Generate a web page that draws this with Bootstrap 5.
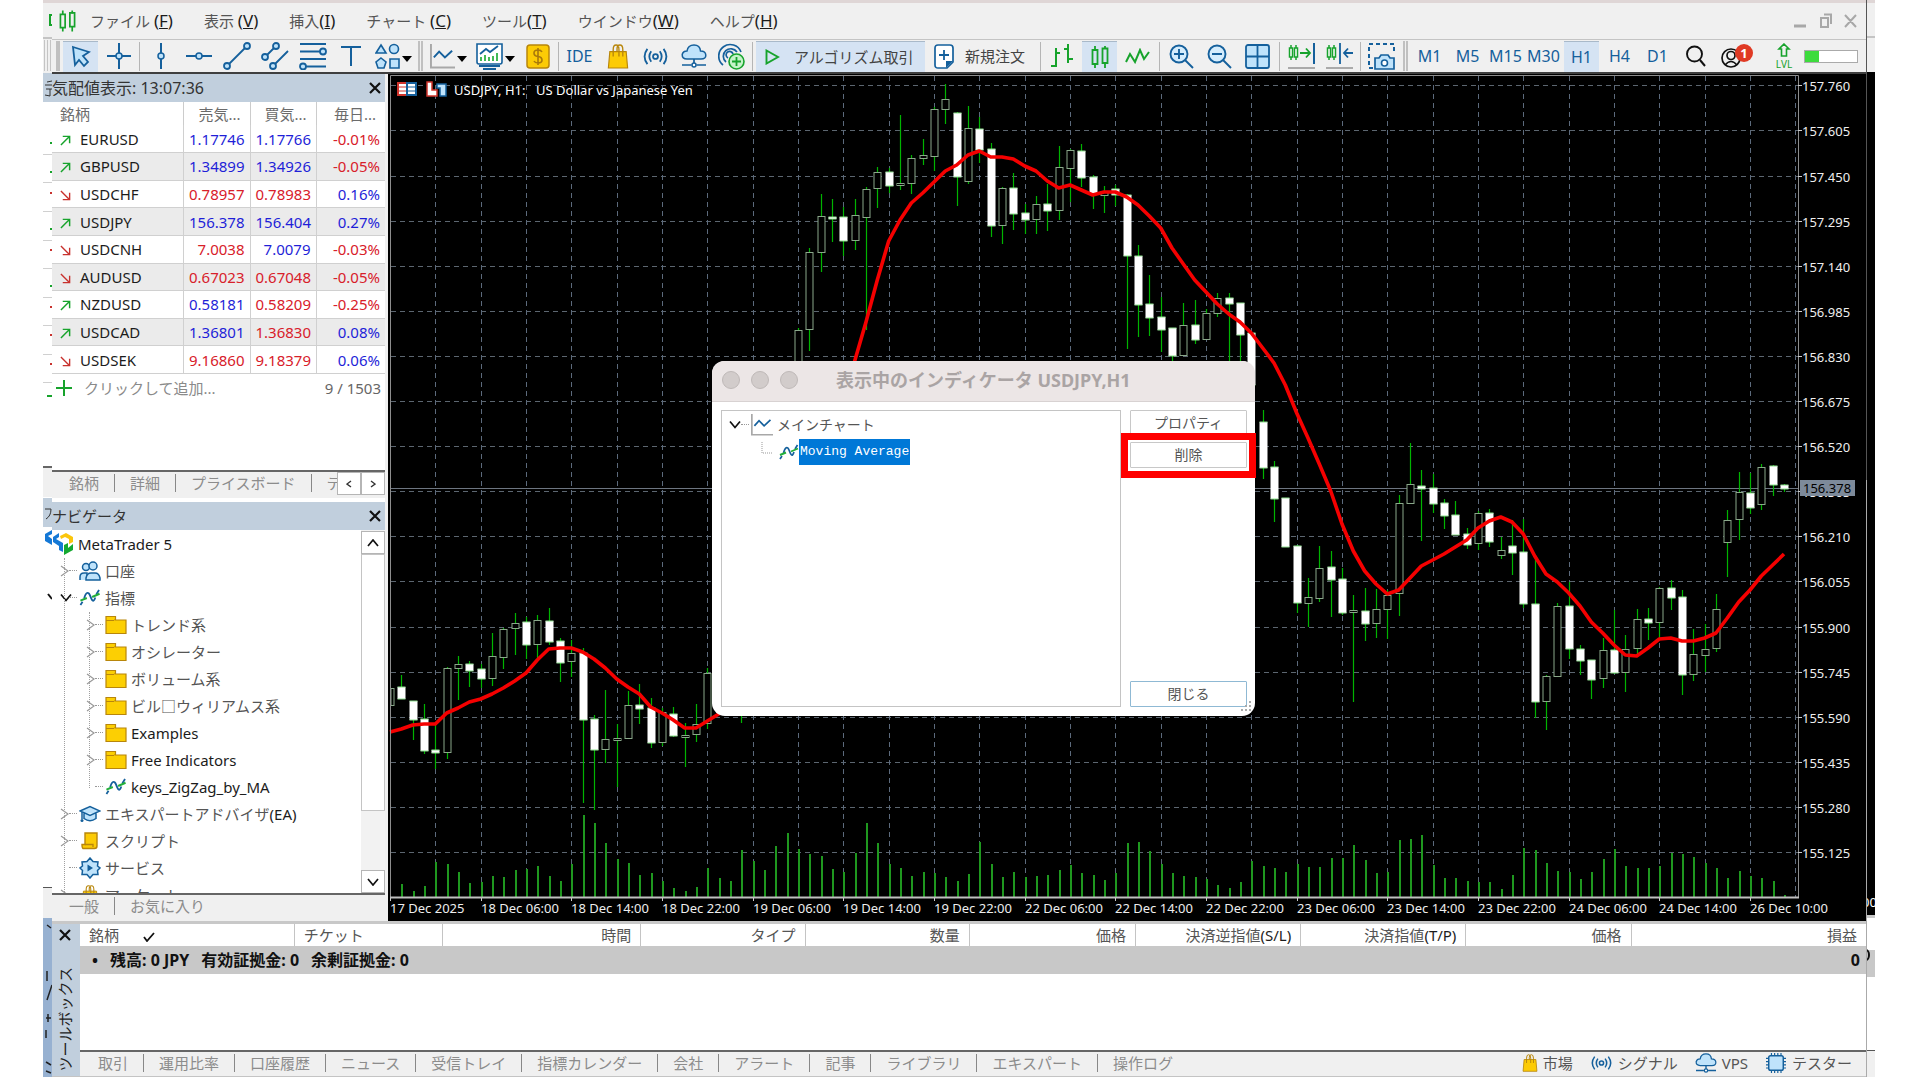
<!DOCTYPE html>
<html lang="ja">
<head>
<meta charset="utf-8">
<meta name="viewport" content="width=device-width, initial-scale=1">
<title>MetaTrader 5 - USDJPY,H1</title>
<link href="https://cdn.jsdelivr.net/npm/bootstrap@5.3.0/dist/css/bootstrap.min.css" rel="stylesheet">
<style>
:root{--ink:#1c1c1c;--kana:#6b6b6b;--line:#bdbdbd;--face:#f0f0f0;--title:#c1cfdd;--blue:#15609c;--sky:#bfe3fb;--green:#17a32c;--gold:#fccb05}
html,body{height:100%}
body{font-family:"Noto Sans","Noto Sans CJK JP",sans-serif;font-size:15px;line-height:20px;color:var(--kana);background:#fff;overflow:hidden}
button{font:inherit;color:inherit}
.stage{height:100vh;min-height:760px;padding:0 45px 3px 43px}
.edge{width:9px;flex:none;overflow:hidden;position:relative}
.win{min-width:0;position:relative}
.lat{color:var(--ink)}
.menubar{height:40px;flex:none;background:var(--face);border-top:3px solid #dfd6d6;border-bottom:1px solid #c4c4c4;padding-left:7px}
.menubar a{color:#555;text-decoration:none;white-space:nowrap}
.menubar .lat{font-size:17px}
.menus{gap:31px;margin-left:14px}
.toolbar{height:34px;flex:none;background:var(--face);border-bottom:2px solid #3f3f3f;gap:3px;padding-left:4px;overflow:hidden}
.tb{border:0;background:transparent;padding:0;width:35px;height:31px;flex:none;display:inline-flex;align-items:center;justify-content:center;color:var(--blue)}
.tb.on{background:#d5e3f3;border-top:1px solid #a9b9c9}
.tb.drop{width:44px;gap:2px}
.tb.drop::after{content:"";border:5px solid transparent;border-top:6px solid #000;border-bottom:0;margin-top:6px}
.tb.tf{font-size:16px}
.sep{width:1px;height:29px;background:#b5b5b5;flex:none}
.sep.wide,.sep2.wide{margin:0 1px}
.sep2{width:5px;height:30px;border:solid #c0c0c0;border-width:0 2px;flex:none}
.tb.algo{width:169px;gap:14px;color:#444;justify-content:flex-start;padding-left:9px}
.tb.neworder{width:109px;gap:11px;color:#444;justify-content:flex-start;padding-left:6px}
.meter{width:56px;height:13px;border:1px solid #aaa;background:#fff;border-radius:0}
.meter .progress-bar{background:#3ddb3d}
.side{width:333px;flex:none;background:#fff}
.chartgap{width:3px;background:var(--face);flex:none}
.paneltitle{height:28px;background:var(--title);color:#333;font-size:15px;flex:none}
.paneltitle.main{font-size:16px}
.closex{border:0;background:transparent;padding:0 4px;line-height:0}
.watch{height:399px;flex:none}
.quotes{table-layout:fixed;width:333px;height:272px;margin:0;border-collapse:collapse;font-size:15px}
.quotes th{font-weight:400;height:23px;padding:0 9px;border-left:1px solid #ccc;vertical-align:middle}
.quotes th:first-child,.quotes td:first-child{border-left:0}
.quotes td{padding:0 5px;border-left:1px solid #d0d0d0;border-bottom:1px solid #d0d0d0;text-align:right;line-height:20px;height:27px;vertical-align:middle}
.quotes td:first-child{text-align:left;color:var(--ink)}
.quotes tr:nth-child(even) td{background:#ebebeb}
.quotes .up{color:#1f1fd8}.quotes .dn{color:#d8202a}
.quotes td svg{margin-right:9px;vertical-align:-1px}
.tabs{height:28px;background:var(--face);border-top:2px solid #666;padding-bottom:4px;flex:none;overflow:hidden}
.tabs button{border:0;background:transparent;color:#8c8c8c;white-space:nowrap;flex:none;padding:0 15px;height:18px;line-height:18px;border-right:1px solid #888}
.tabs button:last-of-type{border-right:0}
.sq{width:24px;height:23px;border:1px solid #b5b5b5;background:#fff;padding:0;line-height:0;display:flex;align-items:center;justify-content:center;flex:none}
.tree{list-style:none;margin:0;padding:0;min-width:0;overflow:hidden;position:relative;color:#555}
.tree li{height:27px;display:flex;align-items:center;white-space:nowrap}
.tree .l1{padding-left:8px}.tree .l2{padding-left:34px}
.tw{width:9px;height:27px;flex:none;display:flex;align-items:center}
.dots{width:8px;border-top:1px dotted #999;flex:none;margin-right:2px}
.tree .ic{margin-right:4px;width:22px}
.vline{position:absolute;border-left:1px dotted #a0a0a0;width:0}
.sbar{width:24px;background:#f2f2f2;flex:none;padding-top:1px}
.thumb{background:#fff;border:1px solid #c4c4c4;height:257px}
.chart{background:#000;min-width:0;overflow:hidden}
.chart svg{display:block;width:100%;height:100%}
.toolbox{height:156px;flex:none;border-top:3px solid #c8c8c8;background:#fff;border-bottom:1px solid #c4c4c4}
.tbside{width:28px;background:var(--title);flex:none;color:#222;padding:5px 3px 4px 0}
.vert{writing-mode:vertical-rl;text-orientation:sideways;transform:rotate(180deg);white-space:nowrap}
.trades{table-layout:fixed;width:100%;margin:0;border-collapse:collapse;color:#555}
.trades th{font-weight:400;height:22px;padding:0 9px;border-left:1px solid #c4c4c4;text-align:right;white-space:nowrap;line-height:20px}
.trades th:first-child{border-left:0}
.trades td{background:#c8c8c8;height:28px;padding:0 6px 0 12px;font-size:16px;line-height:20px;font-weight:700;color:#111;white-space:nowrap}
.trades td span{margin-right:12px}
.status{gap:17px;padding-right:14px;color:#555}
.status a{color:inherit;text-decoration:none;display:flex;align-items:center;gap:5px;white-space:nowrap}
.dlg{position:absolute;left:660px;top:361px;width:543px;height:355px;border-radius:13px;background:#fff;color:#555;font-size:14px}
.dlghead{height:41px;background:#ece6e6;border-bottom:1px solid #d8d2d2;border-radius:12px 12px 0 0;padding:0 0 2px 10px;gap:11px}
.dlghead i{width:18px;height:18px;border-radius:50%;background:#d2cccb;border:1px solid #bfb9b8}
.dlghead h1{font-size:18px;line-height:24px;font-weight:700;color:#aaa4a4;margin:0 0 0 27px;white-space:nowrap}
.dlgbody{padding:8px 8px 9px 9px;gap:9px;height:314px}
.list{border:1px solid #c4c4c4;padding:0 0 0 7px}
.list .r{height:27px;display:flex;align-items:center}
.sel{background:#0078d7;color:#fff;font-family:"Liberation Mono",monospace;font-size:13px;line-height:26px;padding:0 1px}
.dlgbtn{width:117px;height:26px;border:1px solid #c8c8c8;border-radius:1px;background:#fff;padding:0;color:#555}
.redbox{position:absolute;left:409px;top:72px;width:135px;height:45px;border:7px solid #f00}
.grip{position:absolute;right:3px;bottom:3px}
</style>
</head>
<body>
<svg width="0" height="0" class="position-absolute">
 <defs>
  <symbol id="x" viewBox="0 0 12 12"><path d="M1 1L11 11M11 1L1 11" stroke="#111" stroke-width="2.2"/></symbol>
  <symbol id="up" viewBox="0 0 12 12"><path d="M1 11L10 2M3 1.5H10.500V9" fill="none" stroke="#17a32c" stroke-width="1.6"/></symbol>
  <symbol id="dn" viewBox="0 0 12 12"><path d="M1 1L10 10M3 10.500H10.500V3" fill="none" stroke="#c8322e" stroke-width="1.500"/></symbol>
  <symbol id="chev" viewBox="0 0 9 12"><path d="M1 1L8 6L1 11" fill="none" stroke="#999" stroke-width="1.200"/></symbol>
  <symbol id="chevd" viewBox="0 0 12 8"><path d="M1 1L6 7L11 1" fill="none" stroke="#111" stroke-width="1.700"/></symbol>
  <symbol id="folder" viewBox="0 0 22 20"><path d="M1 1.500H10.500V5H21V18.500H1Z" fill="#fccf03" stroke="#b8860b" stroke-width="1.200"/><path d="M1 5.500H9L10.500 4" fill="none" stroke="#b8860b"/></symbol>
  <symbol id="wave" viewBox="0 0 20 16"><path d="M1 15L3 12M4.500 9C6 3 8.500 2 10 6S13 14 15 8M16 5L18.500 1" fill="none" stroke="#15609c" stroke-width="1.700"/><path d="M1 11L7 8.500M12 7.500L19 4.500" stroke="#22ae3a" stroke-width="1.900"/></symbol>
  <symbol id="users" viewBox="0 0 22 20"><g fill="#bfe3fb" stroke="#15609c" stroke-width="1.500"><circle cx="7" cy="6" r="3.500"/><path d="M1 19V16Q1 12 5 12H8V19"/><circle cx="14" cy="5" r="4"/><path d="M7 19V17Q8 12 12 12H16Q20 12 21 17V19Z"/></g></symbol>
  <symbol id="cap" viewBox="0 0 22 18"><path d="M1 6L11 1.500L21 6L11 10.500ZM5 8.500V13.500Q11 18 17 13.500V8.500" fill="#bfe3fb" stroke="#15609c" stroke-width="1.500"/><path d="M3 7V14" stroke="#15609c" stroke-width="1.500"/><circle cx="3" cy="15.500" r="1.500" fill="#15609c"/></symbol>
  <symbol id="scroll" viewBox="0 0 18 18"><path d="M4 1H16V14Q16 16.500 13.500 16.500H2Q1 16 1 12.500H4Z" fill="#fccb05" stroke="#b8860b" stroke-width="1.400"/><path d="M4 12.500H12V15" fill="none" stroke="#b8860b" stroke-width="1.300"/></symbol>
  <symbol id="gear" viewBox="0 0 22 22"><path d="M11 1L14 4.500L19 5L18.500 9L21 11L18.500 13.500L19 17.500L14 17.500L11 21L8 17.500L3 17.500L3.500 13.500L1 11L3.500 9L3 5L8 4.500Z" fill="#bfe3fb" stroke="#15609c" stroke-width="1.500"/><path d="M8.500 7.500L14 11L8.500 14.500Z" fill="#15609c"/></symbol>
  <symbol id="bag" viewBox="0 0 22 26"><path d="M2.500 8H19.500L21 25H1Z" fill="#fccb05" stroke="#b8860b" stroke-width="1.200"/><path d="M6 13V6Q6 1 9 1T12 6V13M10 8V5Q10 1 13 1T16 6V13" fill="none" stroke="#b8860b" stroke-width="1.400"/></symbol>
  <symbol id="sig" viewBox="0 0 26 20"><g fill="none" stroke="#15609c" stroke-width="1.900"><circle cx="13" cy="10" r="2.600"/><path d="M8.500 4.500Q4.500 10 8.500 15.500M17.500 4.500Q21.500 10 17.500 15.500M4.500 2Q-1.500 10 4.500 18M21.500 2Q27.500 10 21.500 18"/></g></symbol>
  <symbol id="cloud" viewBox="0 0 26 24"><path d="M6 15Q1 15 1.200 10.500Q2 7 6 7Q7 1 13 1T19.500 7Q24.500 7 24.800 11T20 15Z" fill="#bfe3fb" stroke="#15609c" stroke-width="1.500"/><path d="M13 15V20M1 21H10.500M15.500 21H25" stroke="#15609c" stroke-width="1.700"/><circle cx="13" cy="21" r="2" fill="#fff" stroke="#15609c" stroke-width="1.500"/></symbol>
  <symbol id="chip" viewBox="0 0 22 22"><path d="M6 0V22M9.500 0V22M13 0V22M16.500 0V22M0 6H22M0 9.500H22M0 13H22M0 16.500H22" stroke="#15609c" stroke-width="1.300"/><rect x="3" y="3" width="16" height="16" rx="2" fill="#bfe3fb" stroke="#15609c" stroke-width="1.600"/></symbol>
  <symbol id="candles" viewBox="0 0 18 24"><path d="M4 1V5M4 19V23M14 1V4M14 18V23" stroke="#17a32c" stroke-width="1.800"/><path d="M1.500 5H6.500V19H1.500ZM11.500 3.500H16.500V18H11.500Z" fill="none" stroke="#17a32c" stroke-width="1.800"/></symbol>
  <symbol id="mt5" viewBox="0 0 20 22"><path d="M0 4L6 0V4L3 6L10 10V19L6 17V13L0 9Z" fill="#1478d6"/><path d="M7 3L13 0L20 4V9L16 11V6L12 4L8 6Z" fill="#fbc60c"/><path d="M11 12L15 10V15L20 11V17L11 22Z" fill="#14a830"/></symbol>
  <symbol id="linech" viewBox="0 0 26 26"><path d="M1 0V24.500H26" fill="none" stroke="#a8a8a8" stroke-width="2"/><path d="M4 14L9.500 8L15.500 14L23 7" fill="none" stroke="#15609c" stroke-width="2"/></symbol>
 </defs>
</svg>

<div class="stage d-flex">
 <div class="edge d-flex flex-column" aria-hidden="true">
  <svg class="h-100" width="9" viewBox="0 0 9 1077" preserveAspectRatio="none">
   <rect width="9" height="1077" fill="#fff"/><rect width="9" height="73" fill="#f0f0f0"/><rect width="9" height="3" fill="#dfd6d6"/><rect y="37" width="9" height="2" fill="#c4c4c4"/>
   <path d="M9 15H7V25H9" fill="none" stroke="#17a32c" stroke-width="2"/><path d="M1.500 40V71M4.500 40V71M7.500 40V71" stroke="#c4c4c4"/>
   <rect y="73" width="9" height="29" fill="#c1cfdd"/><path d="M4 82L9 81M2 85H9M3 89H9M7 89V96L2 95" fill="none" stroke="#333"/>
   <path d="M0 154.500H9M0 182.500H9M0 211.500H9M0 240.500H9M0 268.500H9M0 297.500H9M0 325.500H9M0 354.500H9M0 382.500H9" stroke="#d0d0d0"/>
   <path d="M7 143H9M7 172H9M7 229H9M7 286H9M4 396H9" stroke="#17a32c" stroke-width="2"/><path d="M7 193H9M7 250H9M7 307H9M7 335H9M7 364H9" stroke="#c8322e" stroke-width="2"/>
   <rect y="467" width="9" height="30" fill="#f0f0f0"/><rect y="466" width="9" height="2" fill="#666"/><rect y="498" width="9" height="29" fill="#c1cfdd"/><path d="M2 509H8Q8 516 3 519" fill="none" stroke="#333"/>
   <path d="M2 534L9 530V534L5 536L9 539V545L2 541Z" fill="#1478d6"/><path d="M5 594L9 599" stroke="#111" stroke-width="2"/>
   <rect y="888" width="9" height="31" fill="#f0f0f0"/><rect y="887" width="9" height="1" fill="#555"/>
   <rect y="918" width="9" height="159" fill="#97b1d1"/><path d="M4 925L8 928M4 971V981M4 1000L9 985M3 1018H8M5 1014V1022M3 1038V1030M3 1062L8 1065M3 1071L8 1073" stroke="#222" stroke-width="1.500"/>
  </svg>
 </div>

 <main class="win flex-grow-1 d-flex flex-column">
  <nav class="menubar d-flex align-items-center" aria-label="メニュー">
   <svg width="17" height="24"><use href="#candles"/></svg>
   <div class="menus d-flex">
    <a href="#">ファイル <span class="lat">(<u>F</u>)</span></a><a href="#">表示 <span class="lat">(<u>V</u>)</span></a><a href="#">挿入<span class="lat">(<u>I</u>)</span></a><a href="#">チャート <span class="lat">(<u>C</u>)</span></a><a href="#">ツール<span class="lat">(<u>T</u>)</span></a><a href="#">ウインドウ<span class="lat">(<u>W</u>)</span></a><a href="#">ヘルプ<span class="lat">(<u>H</u>)</span></a>
   </div>
   <svg class="ms-auto me-2" width="64" height="16" fill="none" stroke="#a8a8a8" stroke-width="2"><path d="M0 13H12" stroke-width="3"/><path d="M27 5H34V14H27ZM30 1.500H37V11M51 2L62 14M62 2L51 14"/></svg>
  </nav>

  <div class="toolbar d-flex align-items-center" role="toolbar" aria-label="ツールバー">
   <span class="sep2 me-n1" style="width:4px"></span>
   <button class="tb on" aria-label="カーソル"><svg width="20" height="24"><path d="M2 2L18 7L12 11L17 17L13 21L8 15L4 20Z" fill="#bfe3fb" stroke="#15609c" stroke-width="1.800"/></svg></button>
   <button class="tb" aria-label="クロスヘア"><svg width="24" height="26"><path d="M12 0V26M0 13H24" stroke="#15609c" stroke-width="2"/><circle cx="12" cy="13" r="3" fill="#bfe3fb" stroke="#15609c" stroke-width="1.500"/></svg></button>
   <span class="sep"></span>
   <button class="tb" aria-label="垂直線"><svg width="10" height="26"><path d="M5 0V26" stroke="#15609c" stroke-width="2"/><circle cx="5" cy="13" r="3" fill="#bfe3fb" stroke="#15609c" stroke-width="1.500"/></svg></button>
   <button class="tb" aria-label="水平線"><svg width="26" height="10"><path d="M0 5H26" stroke="#15609c" stroke-width="2"/><circle cx="13" cy="5" r="3" fill="#bfe3fb" stroke="#15609c" stroke-width="1.500"/></svg></button>
   <button class="tb" aria-label="トレンドライン"><svg width="28" height="28"><g fill="#bfe3fb" stroke="#15609c" stroke-width="1.800"><path d="M4 24L24 4"/><circle cx="4" cy="24" r="3"/><circle cx="24" cy="4" r="3"/></g></svg></button>
   <button class="tb" aria-label="チャネル"><svg width="28" height="28"><g fill="#bfe3fb" stroke="#15609c" stroke-width="1.800"><path d="M4 15L15 4M12 24L27 9"/><circle cx="4" cy="15" r="3"/><circle cx="15" cy="4" r="3"/><circle cx="12" cy="24" r="3"/></g></svg></button>
   <button class="tb" aria-label="フィボナッチ"><svg width="28" height="28"><g fill="#bfe3fb" stroke="#15609c" stroke-width="1.800"><path d="M1 2H27M1 9.500H27M1 17H27M1 24.500H27"/><circle cx="24" cy="9.500" r="3"/><circle cx="4" cy="24.500" r="3"/></g></svg></button>
   <button class="tb" aria-label="テキスト"><svg width="20" height="20"><path d="M0 1H20M10 1V20" stroke="#15609c" stroke-width="2"/></svg></button>
   <button class="tb drop" aria-label="図形"><svg width="25" height="26"><g fill="#bfe3fb" stroke="#15609c" stroke-width="1.600"><path d="M6 2L11 10H1Z"/><circle cx="19" cy="6" r="4.500"/><path d="M6 15L11 19L9 25H3L1 19Z"/><path d="M15 16H24V25H15Z"/></g></svg></button>
   <span class="sep2"></span>
   <button class="tb drop" aria-label="ラインチャート"><svg width="25" height="25"><use href="#linech"/></svg></button>
   <button class="tb drop" aria-label="インディケータ"><svg width="27" height="27"><path d="M1 1H26V19Q26 21 24 21H3Q1 21 1 19Z" fill="#fff" stroke="#15609c" stroke-width="1.600"/><path d="M4 11L10 6L14 9L22 3" fill="none" stroke="#15609c" stroke-width="1.800"/><path d="M5 18V14M9 18V12M13 18V14M17 18V13M21 18V10" stroke="#22ae3a" stroke-width="1.700"/><path d="M3 23H24M7 26H20" stroke="#15609c" stroke-width="2"/></svg></button>
   <button class="tb" aria-label="市場"><svg width="24" height="25"><rect x="1" y="1" width="22" height="23" rx="3" fill="#fccb05" stroke="#b8860b" stroke-width="1.500"/><path d="M16 8Q15 6 12 6Q8 6 8 9T12 12.500T16 16T12 19Q9 19 8 17M12 4V21" fill="none" stroke="#a8780b" stroke-width="1.600"/></svg></button>
   <span class="sep"></span>
   <button class="tb tf">IDE</button>
   <button class="tb" aria-label="マーケット"><svg width="22" height="25"><use href="#bag"/></svg></button>
   <button class="tb" aria-label="シグナル"><svg width="25" height="19"><use href="#sig"/></svg></button>
   <button class="tb" aria-label="VPS"><svg width="26" height="24"><use href="#cloud"/></svg></button>
   <button class="tb" aria-label="コピー"><svg width="27" height="27"><g fill="none" stroke="#15609c" stroke-width="1.700"><path d="M5 22A11.500 11.500 0 1 1 23 9M8 19A7.500 7.500 0 1 1 19 9M10 15A3.500 3.500 0 1 1 15 11"/></g><circle cx="18.500" cy="18.500" r="7.500" fill="#c5f3c9" stroke="#17a32c" stroke-width="1.600"/><path d="M18.500 14V23M14 18.500H23" stroke="#17a32c" stroke-width="1.800"/></svg></button>
   <span class="sep"></span>
   <button class="tb on algo"><svg width="15" height="16"><path d="M1.500 1.500L13 8L1.500 14.500Z" fill="none" stroke="#17a32c" stroke-width="1.900"/></svg>アルゴリズム取引</button>
   <button class="tb neworder"><svg width="20" height="25"><path d="M1 4Q1 1 4 1H16Q19 1 19 4V18L13 24H4Q1 24 1 21Z" fill="#fff" stroke="#15609c" stroke-width="1.700"/><path d="M19 17L12 24V17Z" fill="#15609c"/><path d="M10 6V16M5 11H15" stroke="#15609c" stroke-width="1.800"/></svg>新規注文</button>
   <span class="sep"></span>
   <button class="tb" aria-label="バーチャート"><svg width="24" height="24"><path d="M6 4V23M1 22H6M6 9H10M18 0V19M14 5H18M18 15H23" stroke="#17a32c" stroke-width="2"/></svg></button>
   <button class="tb on" aria-label="ローソク足"><svg width="18" height="24"><use href="#candles"/></svg></button>
   <button class="tb" aria-label="ライン"><svg width="25" height="16"><path d="M1 14L5 6L10 14L15 2L19 11L24 4" fill="none" stroke="#17a32c" stroke-width="2"/></svg></button>
   <span class="sep wide"></span>
   <button class="tb" aria-label="拡大"><svg width="25" height="25"><circle cx="10" cy="10" r="8.500" fill="#d5edfd" stroke="#15609c" stroke-width="1.900"/><path d="M16 16L24 24M10 5V15M5 10H15" stroke="#15609c" stroke-width="1.900"/></svg></button>
   <button class="tb" aria-label="縮小"><svg width="25" height="25"><circle cx="10" cy="10" r="8.500" fill="#d5edfd" stroke="#15609c" stroke-width="1.900"/><path d="M16 16L24 24M5 10H15" stroke="#15609c" stroke-width="1.900"/></svg></button>
   <button class="tb" aria-label="整列"><svg width="25" height="25"><rect x="1" y="1" width="23" height="23" rx="2" fill="#bfe3fb" stroke="#15609c" stroke-width="1.800"/><path d="M12.500 1V24M1 12.500H24" stroke="#15609c" stroke-width="1.800"/></svg></button>
   <span class="sep wide"></span>
   <button class="tb" aria-label="チャートシフト"><svg width="27" height="26"><path d="M3 2V17M8 2V17" stroke="#17a32c" stroke-width="1.500"/><path d="M1.500 5H4.500V14H1.500ZM6.500 5H9.500V14H6.500Z" fill="#fff" stroke="#17a32c" stroke-width="1.500"/><path d="M12 10H22M18 5.500L22 10L18 14.500" fill="none" stroke="#17a32c" stroke-width="1.800"/><path d="M26 0V21" stroke="#15609c" stroke-width="2"/><path d="M0 25H27" stroke="#aaa" stroke-width="2"/></svg></button>
   <button class="tb" aria-label="自動スクロール"><svg width="27" height="26"><path d="M3 2V17M8 2V17" stroke="#17a32c" stroke-width="1.500"/><path d="M1.500 5H4.500V14H1.500ZM6.500 5H9.500V14H6.500Z" fill="#fff" stroke="#17a32c" stroke-width="1.500"/><path d="M27 10H18M22 5.500L18 10L22 14.500M14 0V21" fill="none" stroke="#15609c" stroke-width="1.800"/><path d="M0 25H27" stroke="#aaa" stroke-width="2"/></svg></button>
   <span class="sep"></span>
   <button class="tb" aria-label="スクリーンショット"><svg width="27" height="27"><path d="M5 25H1V1H26V11" fill="none" stroke="#15609c" stroke-width="2" stroke-dasharray="4 3"/><path d="M7 15H11L13 12H20L22 15H26V26H7Z" fill="#bfe3fb" stroke="#15609c" stroke-width="1.700"/><circle cx="16.500" cy="20" r="3" fill="#fff" stroke="#15609c" stroke-width="1.600"/></svg></button>
   <span class="sep2 wide"></span>
   <button class="tb tf">M1</button><button class="tb tf">M5</button><button class="tb tf">M15</button><button class="tb tf">M30</button><button class="tb tf on">H1</button><button class="tb tf">H4</button><button class="tb tf">D1</button>
   <button class="tb" aria-label="検索"><svg width="20" height="22"><circle cx="8.500" cy="9" r="7.500" fill="none" stroke="#111" stroke-width="1.900"/><path d="M14 15L19 21" stroke="#111" stroke-width="2"/></svg></button>
   <button class="tb ms-1" aria-label="アカウント"><svg width="33" height="26"><g fill="none" stroke="#111" stroke-width="1.700"><circle cx="10" cy="15" r="9"/><circle cx="10" cy="12.500" r="4"/><path d="M4 22Q10 15 16 22"/></g><circle cx="23" cy="10" r="9" fill="#e03a24"/><text x="23" y="15" text-anchor="middle" font-size="13" font-weight="700" fill="#fff">1</text></svg></button>
   <button class="tb ms-2" aria-label="レベル"><svg width="20" height="26"><path d="M10 1L15 6H12.500V13H7.500V6H5Z" fill="none" stroke="#17a32c" stroke-width="1.600"/><text x="10" y="25" text-anchor="middle" font-size="10" fill="#17a32c">LVL</text></svg></button>
   <div class="progress meter ms-auto me-2" role="progressbar" aria-valuenow="27" aria-valuemin="0" aria-valuemax="100" aria-label="レベル進捗"><div class="progress-bar" style="width:27%"></div></div>
  </div>

  <div class="d-flex flex-grow-1" style="min-height:0">
   <aside class="side d-flex flex-column">
    <section class="watch d-flex flex-column" aria-label="気配値表示">
     <div class="paneltitle main d-flex align-items-center justify-content-between"><span>気配値表示: 13:07:36</span><button class="closex" aria-label="閉じる"><svg width="12" height="12"><use href="#x"/></svg></button></div>
     <table class="quotes">
      <colgroup><col style="width:131px"><col style="width:67px"><col style="width:66px"><col></colgroup>
      <thead><tr><th class="text-start ps-2">銘柄</th><th class="text-end">売気...</th><th class="text-end">買気...</th><th class="text-end">毎日...</th></tr></thead>
      <tbody id="quotes"></tbody>
     </table>
     <div class="d-flex align-items-center justify-content-between ps-1 pe-1 pt-1"><span class="d-flex align-items-center"><svg width="16" height="16" class="me-2"><path d="M8 0V16M0 8H16" stroke="#17a32c" stroke-width="2"/></svg><span class="ps-1" style="color:#8a8a8a">クリックして追加...</span></span><span style="color:#666">9 / 1503</span></div>
    </section>
    <div class="tabs d-flex align-items-center position-relative" style="margin-top:-3px"><button style="padding-left:17px">銘柄</button><button>詳細</button><button>プライスボード</button><button>ティック</button>
     <div class="d-flex position-absolute end-0 top-0 bg-white"><span class="sq"><svg width="6" height="8"><path d="M5 1L1 4L5 7" fill="none" stroke="#333" stroke-width="1.400"/></svg></span><span class="sq"><svg width="6" height="8"><path d="M1 1L5 4L1 7" fill="none" stroke="#333" stroke-width="1.400"/></svg></span></div>
    </div>
    <div class="paneltitle d-flex align-items-center justify-content-between mt-1"><span>ナビゲータ</span><button class="closex" aria-label="閉じる"><svg width="12" height="12"><use href="#x"/></svg></button></div>
    <div class="d-flex flex-grow-1" style="min-height:0">
     <ul class="tree flex-grow-1" id="tree">
      <li class="lat"><svg width="22" height="22" class="me-1"><use href="#mt5"/></svg>MetaTrader 5</li>
     </ul>
     <div class="sbar d-flex flex-column"><span class="sq w-100"><svg width="12" height="8" style="transform:scaleY(-1)"><use href="#chevd"/></svg></span><div class="thumb"></div><span class="sq w-100 mt-auto"><svg width="12" height="8"><use href="#chevd"/></svg></span></div>
    </div>
    <div class="tabs d-flex align-items-center"><button style="padding-left:17px">一般</button><button>お気に入り</button></div>
   </aside>
   <div class="chartgap"></div>
   <section class="chart flex-grow-1" aria-label="USDJPY H1 チャート">
    <svg id="chart" viewBox="388 74 1478 847" preserveAspectRatio="xMinYMin meet" font-family="Noto Sans, sans-serif" font-size="13"></svg>
   </section>
  </div>

  <section class="toolbox d-flex" aria-label="ツールボックス">
   <div class="tbside d-flex flex-column align-items-center justify-content-between"><button class="closex" aria-label="閉じる"><svg width="12" height="12"><use href="#x"/></svg></button><span class="vert">ツールボックス</span></div>
   <div class="flex-grow-1 d-flex flex-column" style="min-width:0">
    <table class="trades">
     <colgroup><col style="width:12%"><col style="width:8.300%"><col style="width:11.100%"><col style="width:9.200%"><col style="width:9.200%"><col style="width:9.300%"><col style="width:9.250%"><col style="width:9.250%"><col style="width:9.250%"><col></colgroup>
     <thead><tr><th class="text-start">銘柄<svg width="12" height="10" class="ms-4"><path d="M1 5L4 9L11 1" fill="none" stroke="#111" stroke-width="1.800"/></svg></th><th class="text-start">チケット</th><th>時間</th><th>タイプ</th><th>数量</th><th>価格</th><th>決済逆指値<span class="lat">(S/L)</span></th><th>決済指値<span class="lat">(T/P)</span></th><th>価格</th><th>損益</th></tr></thead>
     <tbody><tr><td colspan="9"><span>•</span><span>残高: 0 JPY</span><span>有効証拠金: 0</span><span>余剰証拠金: 0</span></td><td class="text-end">0</td></tr></tbody>
    </table>
    <div class="tabs d-flex align-items-center mt-auto" style="height:26px;padding-bottom:2px"><button style="padding-left:18px">取引</button><button>運用比率</button><button>口座履歴</button><button>ニュース</button><button>受信トレイ</button><button>指標カレンダー</button><button>会社</button><button>アラート</button><button>記事</button><button>ライブラリ</button><button>エキスパート</button><button>操作ログ</button>
     <div class="status d-flex ms-auto"><a href="#"><svg width="16" height="18"><use href="#bag"/></svg>市場</a><a href="#"><svg width="23" height="16"><use href="#sig"/></svg>シグナル</a><a href="#" class="lat"><svg width="22" height="20"><use href="#cloud"/></svg>VPS</a><a href="#"><svg width="22" height="20"><use href="#chip"/></svg>テスター</a></div>
    </div>
   </div>
  </section>

  <div class="dlg" role="dialog" aria-labelledby="dt">
   <div class="dlghead d-flex align-items-center"><i></i><i></i><i></i><h1 id="dt">表示中のインディケータ USDJPY,H1</h1></div>
   <div class="dlgbody d-flex">
    <div class="list flex-grow-1">
     <div class="r"><svg width="12" height="9"><use href="#chevd"/></svg><span class="dots"></span><svg width="22" height="24" class="me-1"><use href="#linech"/></svg>メインチャート</div>
     <div class="r"><svg width="14" height="20" style="margin-left:32px"><path d="M1 0V11H12" fill="none" stroke="#999" stroke-dasharray="1 1"/></svg><svg width="20" height="18" class="ms-1 me-0"><use href="#wave"/></svg><span class="sel">Moving Average</span></div>
    </div>
    <div class="d-flex flex-column"><button class="dlgbtn">プロパティ</button><button class="dlgbtn" style="margin-top:6px">削除</button><button class="dlgbtn mt-auto" style="border-color:#8fb9d4">閉じる</button></div>
   </div>
   <div class="redbox"></div>
   <svg class="grip" width="12" height="12" fill="#aaa"><path d="M9 0H11V2H9ZM5 4H7V6H5ZM9 4H11V6H9ZM1 8H3V10H1ZM5 8H7V10H5ZM9 8H11V10H9Z"/></svg>
  </div>
 </main>

 <div class="edge" aria-hidden="true">
  <svg class="h-100" width="9" viewBox="0 0 9 1077" preserveAspectRatio="none">
   <rect width="9" height="1077" fill="#fff"/><rect width="9" height="72" fill="#f0f0f0"/><rect width="9" height="3" fill="#dfd6d6"/><path d="M0 37H9" stroke="#c4c4c4" stroke-width="2"/>
   <rect y="72" width="9" height="843" fill="#000"/><rect y="915" width="9" height="3" fill="#c8c8c8"/><rect y="950" width="9" height="27" fill="#c8c8c8"/>
   <ellipse cx="0" cy="955" rx="3" ry="5" fill="none" stroke="#111" stroke-width="2"/><text x="-4" y="907" font-size="13" fill="#fff">00</text>
   <rect y="1050" width="9" height="27" fill="#f0f0f0"/><rect y="1050" width="9" height="1" fill="#555"/><path d="M.5 0V480" stroke="#555"/><path d="M.5 480V1077" stroke="#aaa"/>
  </svg>
 </div>
</div>

<script>
const use=(id,w,h,c='')=>`<svg width="${w}" height="${h}" class="${c}"><use href="#${id}"/></svg>`;
/* symbol, trend, bid, bid colour, ask, ask colour, daily change */
const Q=[['EURUSD','up','1.17746','up','1.17766','up','-0.01%'],['GBPUSD','up','1.34899','up','1.34926','up','-0.05%'],['USDCHF','dn','0.78957','dn','0.78983','dn','0.16%'],['USDJPY','up','156.378','up','156.404','up','0.27%'],['USDCNH','dn','7.0038','dn','7.0079','up','-0.03%'],['AUDUSD','dn','0.67023','dn','0.67048','dn','-0.05%'],['NZDUSD','up','0.58181','up','0.58209','dn','-0.25%'],['USDCAD','up','1.36801','up','1.36830','dn','0.08%'],['USDSEK','dn','9.16860','dn','9.18379','dn','0.06%']];
document.getElementById('quotes').innerHTML=Q.map(q=>`<tr><td class="ps-2">${use(q[1],11,11)}${q[0]}</td><td class="${q[3]}">${q[2]}</td><td class="${q[5]}">${q[4]}</td><td class="${q[6][0]=='-'?'dn':'up'}">${q[6]}</td></tr>`).join('');
/* level, twisty, icon, icon height, text */
const T=[[1,'r','users',20,'口座'],[1,'d','wave',17,'指標'],[2,'r','folder',20,'トレンド系'],[2,'r','folder',20,'オシレーター'],[2,'r','folder',20,'ボリューム系'],[2,'r','folder',20,'ビル□ウィリアムス系'],[2,'r','folder',20,'<span class="lat">Examples</span>'],[2,'r','folder',20,'<span class="lat">Free Indicators</span>'],[2,'','wave',17,'<span class="lat">keys_ZigZag_by_MA</span>'],[1,'r','cap',18,'エキスパートアドバイザ<span class="lat">(EA)</span>'],[1,'r','scroll',18,'スクリプト'],[1,'','gear',22,'サービス'],[1,'r','bag',20,'マーケット']];
document.getElementById('tree').insertAdjacentHTML('beforeend',T.map(t=>`<li class="l${t[0]}"><span class="tw">${t[1]=='r'?use('chev',9,12):t[1]=='d'?use('chevd',12,9,'flex-shrink-0'):''}</span><span class="dots"></span>${use(t[2],22,t[3],'ic')}${t[4]}</li>`).join('')+'<li class="vline" style="left:12px;top:28px;height:340px"></li><li class="vline" style="left:37px;top:82px;height:176px"></li>');

/* candles: index, high, body top, body bottom, low, falling(1)/rising(0) */
const C=[[0,688,688,706,706,0],[1,675,687,699,699,1],[2,701,701,720,740,1],[3,704,719,751,754,1],[4,723,750,753,769,1],[5,667,668,753,759,0],[6,656,664,669,700,0],[7,661,664,671,687,1],[8,664,669,679,688,1],[9,633,656,679,686,0],[10,628,629,658,669,0],[11,613,623,629,655,0],[12,617,622,645,659,1],[13,615,620,645,660,0],[14,608,621,642,645,1],[15,638,641,663,682,1],[16,640,653,662,677,0],[17,648,653,720,803,1],[18,715,719,750,810,1],[19,690,739,750,763,0],[20,724,738,740,787,0],[21,691,705,739,739,0],[22,684,705,709,724,1],[23,698,708,743,748,1],[24,708,712,743,746,0],[25,707,714,736,737,1],[26,723,735,738,767,0],[27,704,724,735,742,0],[28,668,673,724,729,0],[31,700,705,715,723,0],
[36,328,330,400,410,0],[37,248,252,330,351,0],[38,194,216,253,272,0],[39,199,217,219,242,1],[40,207,217,241,256,1],[41,199,215,241,250,0],[42,187,189,218,330,0],[43,167,172,189,208,0],[44,168,172,186,193,1],[45,115,183,186,190,0],[46,155,158,184,194,0],[47,139,155,159,165,0],[48,107,109,157,171,0],[49,84,99,110,124,0],[50,112,113,177,206,1],[51,106,128,182,184,0],[52,117,129,150,163,1],[53,143,149,226,237,1],[54,187,188,226,244,0],[55,173,188,214,230,1],[56,204,213,220,234,1],[57,196,204,220,234,0],[58,184,204,211,231,1],[59,146,167,211,220,0],[60,149,150,169,202,0],[61,144,151,178,187,1],[62,175,177,194,209,1],[63,186,191,196,213,0],[64,185,189,195,206,1],[65,194,195,256,349,1],[66,245,256,305,337,1],[67,275,304,318,336,1],[68,297,317,330,352,1],[69,328,328,356,365,1],[70,303,325,356,356,0],[71,300,325,340,344,1],[72,309,313,340,340,0],[73,293,298,314,317,0],[74,293,298,304,375,1],[75,303,303,335,375,1],[76,333,333,385,420,1],[77,410,422,468,479,1],[78,461,467,499,522,1],[79,498,498,547,547,1],[80,545,546,603,613,1],[81,578,597,604,627,0],[82,546,568,599,602,0],[83,551,567,580,617,1],[84,568,579,613,615,1],[85,595,610,613,702,0],[86,588,611,624,641,1],[87,589,609,624,638,0],[88,590,595,610,639,0],[89,495,503,594,616,0],[90,443,484,504,504,0],[91,470,486,489,541,1],[92,474,488,504,513,1],[93,499,503,516,529,1],[94,501,515,535,535,1],[95,528,534,545,549,1],[96,511,513,544,550,0],[97,509,513,542,547,1],[98,537,550,556,559,0],[99,520,546,553,575,1],[100,519,552,604,608,1],[101,559,604,702,718,1],[102,675,676,702,730,0],[103,603,606,677,677,0],[104,582,606,649,659,1],[105,645,649,661,675,1],[106,660,660,680,699,1],[107,638,650,679,688,0],[108,610,650,673,674,1],[109,635,649,673,692,0],[110,609,619,649,657,0],[111,608,619,623,640,1],[112,587,588,623,638,0],[113,580,588,598,610,1],[114,590,597,675,695,1],[115,629,654,675,681,0],[116,624,649,656,672,0],[117,594,609,649,652,0],[118,510,520,543,577,0],[119,472,492,520,540,0],[120,473,493,508,514,1],[121,464,467,505,510,0],[122,465,466,485,496,1],[123,484,485,489,492,1]];
/* moving average, one y per bar */
const MA=[732,729,725,724,724,713,708,702,699,694,688,681,673,660,649,648,648,652,659,668,679,687,694,707,713,720,728,728,721,714,705,692,675,650,620,585,545,510,470,435,400,361,322,280,241,220,203,193,182,171,165,155,151,157,157,159,166,171,181,188,185,190,195,192,192,197,205,216,228,248,264,280,292,304,314,322,333,348,363,385,413,438,464,491,524,551,571,584,594,590,578,566,560,554,547,540,528,521,517,522,534,556,574,582,593,606,622,633,645,655,656,648,639,638,641,641,638,633,618,602,590,576,565,554];
/* tick volume: y of each bar's top */
const V=[882,884,891,886,862,864,872,883,882,876,877,870,869,866,876,881,864,815,823,843,859,863,875,873,881,888,891,887,868,878,881,850,861,870,846,833,849,854,856,869,872,853,823,843,864,868,876,872,873,877,881,874,842,864,877,872,877,876,875,870,865,873,875,880,873,843,842,851,864,873,876,877,879,885,888,882,861,866,868,872,864,867,867,858,858,845,860,873,872,840,839,835,865,878,878,881,882,882,889,875,848,850,863,871,872,879,872,859,849,866,868,868,866,853,854,857,863,868,878,871,876,878,881,895];
const X=k=>390+k*34/3;
let s='<rect x="388" y="73" width="1478" height="848" fill="#000"/>';
for(let i=0;i<18;i++){const y=Math.round(85.3+45.1*i)+.5;s+=`<path d="M391 ${y}H1798" stroke="#5c6670" stroke-dasharray="5 4"/>`;}
for(let i=1;i<=31;i++){const x=Math.round(390+45.33*i)+.5;s+=`<path d="M${x} 76V897" stroke="#5c6a7c" stroke-dasharray="5 4"/>`;}
s+='<path d="M391 488.500H1798" stroke="#6d7580"/>';
V.forEach((y,k)=>{if(k)s+=`<rect x="${Math.round(X(k))}" y="${y}" width="2" height="${897-y}" fill="#1f981f"/>`;});
C.forEach(([k,h,t,b,l,d])=>{const x=Math.round(X(k))+.5;
 s+=`<path d="M${x} ${h}V${t}M${x} ${b}V${l}" stroke="#00b400" stroke-width="1.200"/>`;
 const x0=Math.max(x-4,390.5),w=x+4-x0;
 s+=d?`<rect x="${x0}" y="${t}" width="${w}" height="${Math.max(b-t,2)}" fill="#fff"/><path d="M${x0} ${t}h${w}M${x0} ${b}h${w}" stroke="#8fe08f"/>`:`<rect x="${x0+.5}" y="${t+.5}" width="${w-1}" height="${Math.max(b-t-1,2)}" fill="#000" stroke="#8aa88a"/>`;});
s+=`<polyline points="${MA.map((y,k)=>X(k).toFixed(1)+','+y).join(' ')}" fill="none" stroke="#f50000" stroke-width="3.600" stroke-linejoin="round"/>`;
s+='<path d="M390.500 897V75.500H1798.500V897" fill="none" stroke="#8d8d8d"/><path d="M390 897.500H1799" stroke="#c0c0c0" stroke-width="2"/>';
for(let i=0;i<18;i++){const y=Math.round(85.3+45.1*i);s+=`<path d="M1798 ${y+.5}h4" stroke="#ccc"/><text x="1802" y="${y+6}" fill="#eee">${(157.760-.155*i).toFixed(3)}</text>`;}
s+='<rect x="1800" y="480" width="55" height="16" fill="#7d8a9a"/><text x="1803" y="493" fill="#000">156.378</text>';
['17 Dec 2025','18 Dec 06:00','18 Dec 14:00','18 Dec 22:00','19 Dec 06:00','19 Dec 14:00','19 Dec 22:00','22 Dec 06:00','22 Dec 14:00','22 Dec 22:00','23 Dec 06:00','23 Dec 14:00','23 Dec 22:00','24 Dec 06:00','24 Dec 14:00','26 Dec 10:00'].forEach((t,i)=>{const x=Math.round(390+i*90.67);s+=`<path d="M${x+.5} 898v3" stroke="#ccc"/><text x="${x}" y="913" fill="#eee">${t}</text>`;});
s+='<g><path d="M398 83H407V95H398Z" fill="#fff" stroke="#d0342c" stroke-width="2"/><path d="M407 83H416V95H407Z" fill="#fff" stroke="#15609c" stroke-width="2"/><path d="M399 87H406M399 91H406" stroke="#d0342c"/><path d="M408 87H415M408 91H415" stroke="#15609c"/><path d="M427 82H432V90H437V96H427Z" fill="#fff" stroke="#d0342c" stroke-width="1.500"/><path d="M437 84H446V96H440V88H437Z" fill="#bfe3fb" stroke="#15609c" stroke-width="1.500"/></g>';
s+='<text x="454" y="95" fill="#fff">USDJPY, H1:</text><text x="536" y="95" fill="#fff">US Dollar vs Japanese Yen</text>';
document.getElementById('chart').innerHTML=s;
</script>
<script src="https://cdn.jsdelivr.net/npm/bootstrap@5.3.0/dist/js/bootstrap.bundle.min.js"></script>
</body>
</html>
